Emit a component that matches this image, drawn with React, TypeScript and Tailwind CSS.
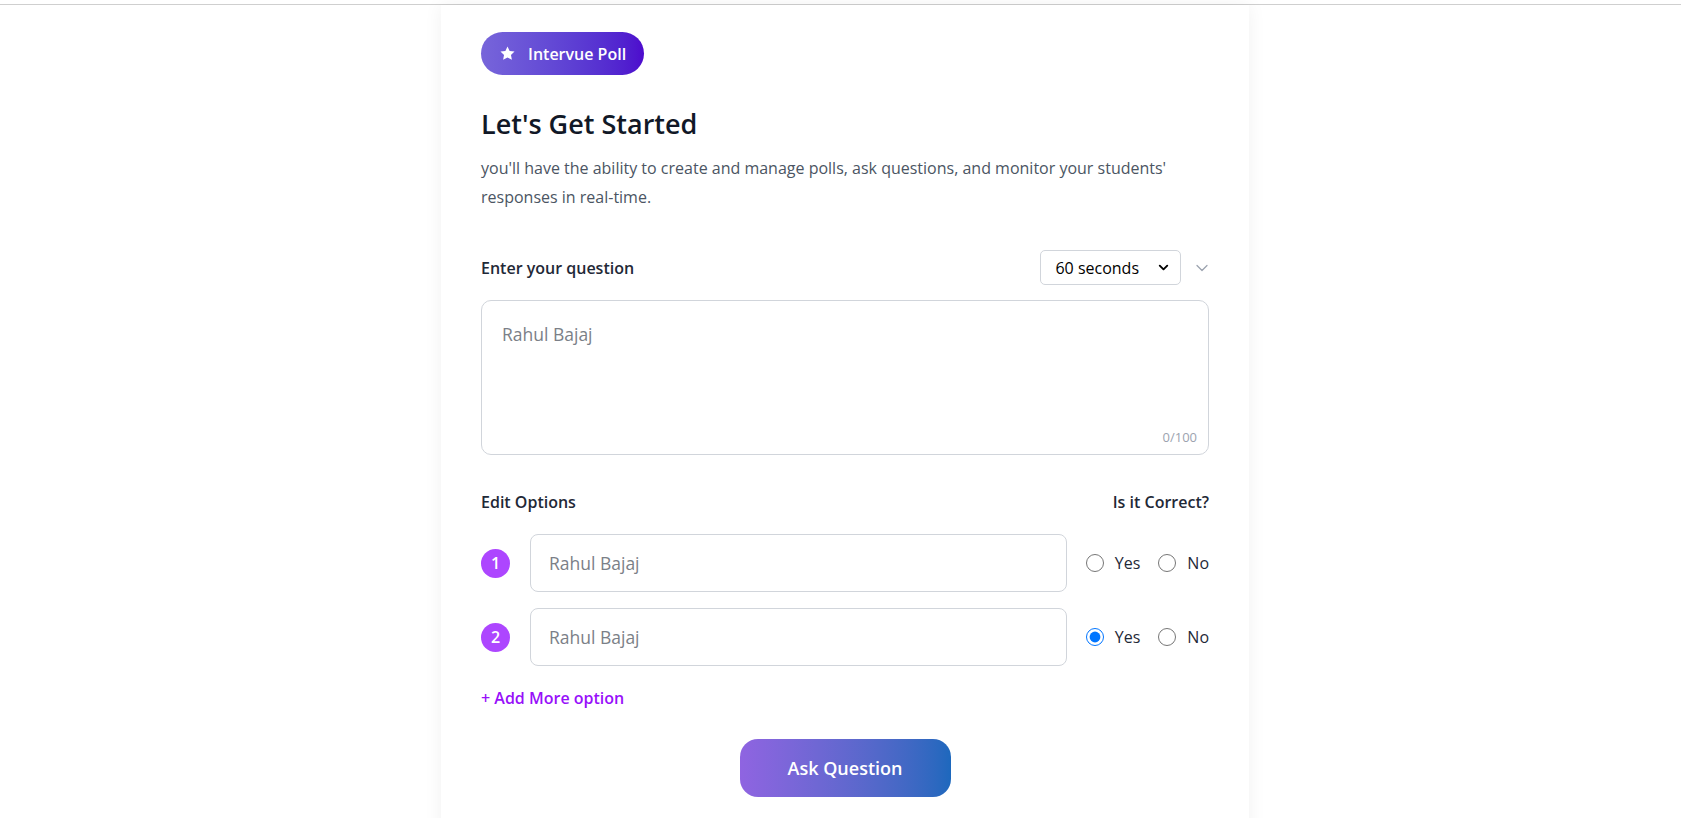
import { ChevronDown } from 'lucide-react';

function StarIcon() {
  return (
    <svg width="17" height="17" viewBox="0 0 24 24" fill="currentColor">
      <path d="M12 2l3 6.3 6.9.9-5 4.8 1.3 6.8L12 17.5l-6.2 3.3 1.3-6.8-5-4.8 6.9-.9z" />
    </svg>
  );
}

interface OptionRowProps {
  index: number;
  correct: boolean;
}

function OptionRow({ index, correct }: OptionRowProps) {
  return (
    <div className="flex items-center">
      <div className="w-[29px] h-[29px] rounded-full bg-[#ad46ff] text-white text-base font-semibold flex items-center justify-center shrink-0">
        {index}
      </div>
      <input
        type="text"
        placeholder="Rahul Bajaj"
        className="ml-5 flex-1 h-[58px] px-[18px] border border-[#d1d5db] rounded-[8px] text-[17.5px] text-gray-800 placeholder:text-[#7b7f87] outline-none"
      />
      <div className="ml-[19px] flex items-center gap-[18px] text-base text-[#1f2937]">
        <label className="flex items-center gap-[11px]">
          <input type="radio" name={`correct-${index}`} defaultChecked={correct} className="w-[18px] h-[18px] m-0" />
          Yes
        </label>
        <label className="flex items-center gap-[11px]">
          <input type="radio" name={`correct-${index}`} className="w-[18px] h-[18px] m-0" />
          No
        </label>
      </div>
    </div>
  );
}

export default function App() {
  return (
    <div className="min-h-screen bg-white font-['Open_Sans',sans-serif]">
      <div className="h-[4px]" />
      <div className="h-px bg-[#cfcfcf]" />
      <div className="flex justify-center pl-[9px]">
        <div className="w-[808px] bg-white shadow-[0_0_18px_rgba(0,0,0,0.06)] px-10 pt-[27px] pb-10">
          <div className="inline-flex items-center gap-[12px] h-[43px] px-[18px] rounded-full bg-gradient-to-r from-[#7765da] to-[#4d0acd] text-white text-base font-semibold">
            <StarIcon />
            Intervue Poll
          </div>

          <h1 className="mt-[30px] text-[27px] leading-[38px] font-semibold text-[#111827]">Let's Get Started</h1>
          <p className="mt-[11px] text-base leading-[29px] text-[#4b5563]">
            you'll have the ability to create and manage polls, ask questions, and monitor your students'
            responses in real-time.
          </p>

          <div className="mt-[38px] flex items-center justify-between">
            <label className="text-base font-semibold text-[#1f2937]">Enter your question</label>
            <div className="flex items-center gap-[11px] -mr-[3px]">
              <div className="w-[141px] h-[35px] border border-[#d1d5db] rounded-[5px] flex items-center justify-end pr-[9px] gap-[17px] text-base text-black">
                60 seconds
                <ChevronDown size={15} strokeWidth={3} />
              </div>
              <ChevronDown size={20} strokeWidth={1.5} className="text-[#9ca3af]" />
            </div>
          </div>

          <div className="mt-[15px] relative">
            <textarea
              placeholder="Rahul Bajaj"
              className="block w-full h-[155px] resize-none border border-[#d1d5db] rounded-[10px] px-5 py-[20px] text-[17.5px] text-gray-800 placeholder:text-[#7b7f87] outline-none"
            />
            <span className="absolute right-3 bottom-[8px] text-[13px] text-[#9ca3af]">0/100</span>
          </div>

          <div className="mt-[35px] flex items-center justify-between text-base font-semibold text-[#1f2937]">
            <span>Edit Options</span>
            <span>Is it Correct?</span>
          </div>

          <div className="mt-[20px] flex flex-col gap-4">
            <OptionRow index={1} correct={false} />
            <OptionRow index={2} correct={true} />
          </div>

          <button className="mt-[20px] text-base font-semibold text-[#9810fa]">+ Add More option</button>

          <div className="mt-[29px] flex justify-center">
            <button className="w-[211px] h-[58px] rounded-[18px] bg-gradient-to-r from-[#8f64e1] to-[#1d68bd] text-white text-lg font-semibold">
              Ask Question
            </button>
          </div>
        </div>
      </div>
    </div>
  );
}
